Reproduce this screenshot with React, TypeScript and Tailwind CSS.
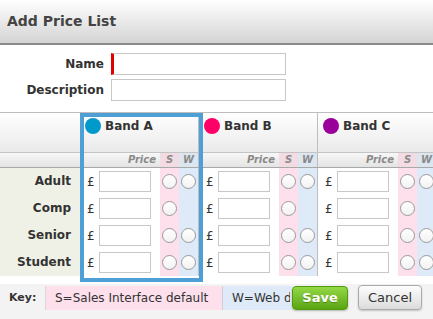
import React from "react";

const bands = [
  { name: "Band A", color: "bg-[#0099cc]" },
  { name: "Band B", color: "bg-[#ff0066]" },
  { name: "Band C", color: "bg-[#990099]" },
];

const rows = [
  { label: "Adult", w: true },
  { label: "Comp", w: false },
  { label: "Senior", w: true },
  { label: "Student", w: true },
];

function Radio() {
  return (
    <span className="block w-[15px] h-[15px] rounded-full border border-[#9a9a9a] bg-gradient-to-b from-white to-[#f2f2f2]" />
  );
}

export default function App() {
  return (
    <div className="relative w-[433px] h-[319px] overflow-hidden bg-white font-['DejaVu_Sans',sans-serif] text-[#333]">
      {/* Title bar */}
      <div className="h-[45px] flex items-center pl-[7px] pb-[1px] bg-gradient-to-b from-white to-[#d4d4d4] border-b-2 border-[#8a8a8a]">
        <h1 className="text-[14px] font-bold text-[#444]">Add Price List</h1>
      </div>

      {/* Form */}
      <div className="pt-[8px] flex flex-col gap-[4px]">
        <div className="flex items-center h-[22px]">
          <label className="w-[104px] text-right text-[12px] font-bold">Name</label>
          <input className="ml-[7px] w-[175px] h-[22px] border border-[#c8c8c8] border-l-[3px] border-l-[#e00000] bg-white outline-none" />
        </div>
        <div className="flex items-center h-[22px]">
          <label className="w-[104px] text-right text-[12px] font-bold">Description</label>
          <input className="ml-[7px] w-[175px] h-[22px] border border-[#c8c8c8] bg-white outline-none" />
        </div>
      </div>

      {/* Table */}
      <div className="mt-[11px] border-t border-[#bdbdbd] w-[520px]">
        {/* Band header row */}
        <div className="flex h-[40px] border-b border-[#c4c4c4] bg-gradient-to-b from-white to-[#eaeaea]">
          <div className="w-[80px] shrink-0" />
          {bands.map((b) => (
            <div key={b.name} className="w-[119px] shrink-0 border-r border-[#bdbdbd] flex items-start pt-[5px] pl-[5px] gap-[4px]">
              <span className={`block w-[16px] h-[16px] rounded-full ${b.color}`} />
              <span className="text-[12px] font-bold leading-[16px] text-[#333]">{b.name}</span>
            </div>
          ))}
        </div>
        {/* Sub header row */}
        <div className="flex h-[15px] border-b border-[#a8a8a8] bg-gradient-to-b from-[#f7f7f7] to-[#e4e4e4]">
          <div className="w-[80px] shrink-0" />
          {bands.map((b) => (
            <div key={b.name} className="w-[119px] shrink-0 border-r border-[#bdbdbd] flex text-[10px] font-bold italic text-[#8a8a8a] leading-[14px]">
              <div className="w-[80px] text-right pr-[4px]">Price</div>
              <div className="w-[19px] text-center bg-[#f3dbe3]">S</div>
              <div className="w-[19px] text-center bg-[#dce6f1]">W</div>
            </div>
          ))}
        </div>
        {/* Body */}
        {rows.map((r) => (
          <div key={r.label} className="flex h-[27px]">
            <div className="w-[80px] shrink-0 bg-[#eff1e6] text-right pr-[9px] text-[12px] font-bold leading-[27px]">
              {r.label}
            </div>
            {bands.map((b) => (
              <div key={b.name} className="w-[119px] shrink-0 border-r border-[#bdbdbd] flex items-center">
                <div className="w-[80px] flex items-center h-full">
                  <span className="w-[19px] pl-[7px] text-[12px] text-[#333]">£</span>
                  <input className="w-[52px] h-[21px] border border-[#c8c8c8] bg-white outline-none" />
                </div>
                <div className="w-[19px] h-full bg-[#fde0eb] flex items-center justify-center">
                  <Radio />
                </div>
                <div className="w-[19px] h-full bg-[#deeaf8] flex items-center justify-center">
                  {r.w && <Radio />}
                </div>
              </div>
            ))}
          </div>
        ))}
      </div>

      {/* Footer */}
      <div className="mt-[8px] h-[40px] bg-[#f3f3f3] flex items-start pt-[2px]">
        <div className="w-[45px] h-[24px] flex items-center pl-[9px] text-[11px] font-bold text-[#333]">Key:</div>
        <div className="h-[24px] w-[177px] bg-[#fde0ec] border-l border-[#d8d8d8] flex items-center pl-[9px] text-[12px] text-[#333] whitespace-nowrap">
          S=Sales Interface default
        </div>
        <div className="h-[24px] w-[70px] overflow-hidden bg-[#deeaf8] border-l border-[#d0d0d0] flex items-center pl-[9px] text-[12px] text-[#333] whitespace-nowrap">
          <span className="block overflow-hidden w-[58px]">W=Web default</span>
        </div>
      </div>

      {/* Band A selection outline */}
      <div className="absolute left-[80px] top-[113px] w-[123px] h-[169px] border-4 border-[#4d9fd6] pointer-events-none" />

      {/* Buttons */}
      <button className="absolute left-[292px] top-[286px] w-[56px] h-[24px] rounded-[4px] border border-[#4f9a0b] bg-gradient-to-b from-[#94d845] to-[#5aa40f] text-white text-[13px] font-bold [text-shadow:0_1px_0_rgba(0,0,0,0.25)] shadow-[0_1px_2px_rgba(0,0,0,0.25)]">
        Save
      </button>
      <button className="absolute left-[358px] top-[285px] w-[64px] h-[25px] rounded-[4px] border border-[#aaaaaa] bg-gradient-to-b from-[#fdfdfd] to-[#dcdcdc] text-[#333] text-[13px] shadow-[0_1px_2px_rgba(0,0,0,0.2)]">
        Cancel
      </button>
    </div>
  );
}
